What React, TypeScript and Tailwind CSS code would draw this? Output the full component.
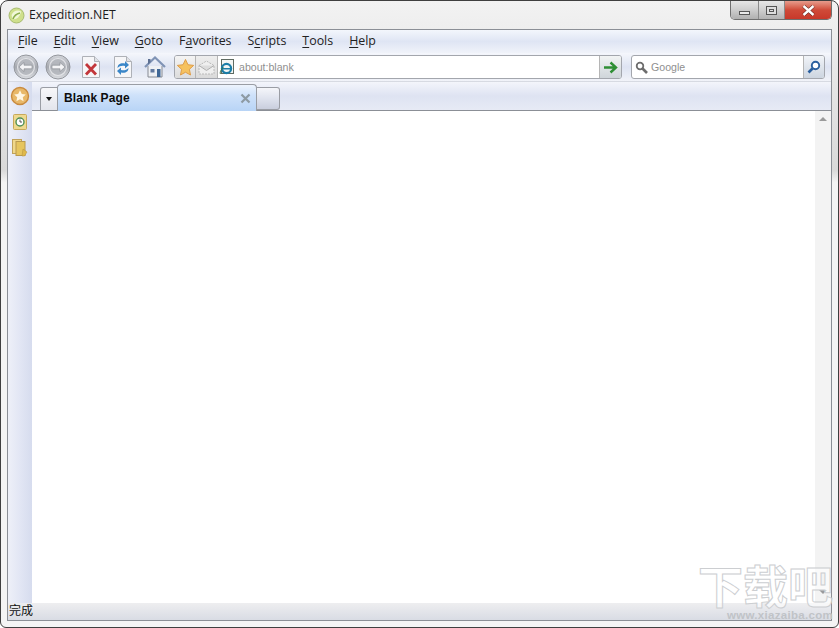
import React from "react";

const font = { fontFamily: '"Liberation Sans", "Noto Sans CJK SC", sans-serif' };

function Menu({ pre, u, post }: { pre?: string; u: string; post: string }) {
  return (
    <span className="text-[12.400px] text-[#222] [font-family:'Open_Sans','Liberation_Sans',sans-serif]">
      {pre}
      <span className="underline underline-offset-2">{u}</span>
      {post}
    </span>
  );
}

function Round({ dir }: { dir: "l" | "r" }) {
  return (
    <svg width="26" height="26" viewBox="0 0 26 26">
      <defs>
        <linearGradient id={"rg" + dir} x1="0" y1="0" x2="0" y2="1">
          <stop offset="0" stopColor="#d4d6db" />
          <stop offset="0.5" stopColor="#a6a9b0" />
          <stop offset="1" stopColor="#dcdee2" />
        </linearGradient>
      </defs>
      <circle cx="13" cy="13" r="12" fill={"url(#rg" + dir + ")"} stroke="#94979d" />
      <circle cx="13" cy="13" r="8.500" fill="#b4b7bd" stroke="#e8e9ec" strokeWidth="1.200" opacity="0.85" />
      {dir === "l" ? (
        <path d="M6 13l5-4.500v2.700h8v3.600h-8v2.700z" fill="#f4f4f6" stroke="#85888e" strokeWidth="0.600" />
      ) : (
        <path d="M20 13l-5-4.500v2.700h-8v3.600h8v2.700z" fill="#f4f4f6" stroke="#85888e" strokeWidth="0.600" />
      )}
    </svg>
  );
}

function Page({ children }: { children: React.ReactNode }) {
  return (
    <svg width="20" height="24" viewBox="0 0 20 24">
      <path d="M1.500 1.500h12l5 5v16h-17z" fill="#f6f6f8" stroke="#aeb1b7" />
      <path d="M13.500 1.500v5h5" fill="#dfe1e6" stroke="#aeb1b7" />
      {children}
    </svg>
  );
}

export default function App() {
  return (
    <div style={font} className="relative w-[839px] h-[628px] overflow-hidden bg-white">
      <div className="flex flex-col w-full h-full rounded-t-[8px] rounded-b-[6px] border border-[#3f3f3f] bg-gradient-to-b from-[#f2f2f2] via-[#d9d9d9] via-[27%] to-[#f4f4f4] to-[29%]">
        {/* Title bar */}
        <div className="flex items-start h-[28px] shrink-0 relative">
          <div className="flex items-center h-[28px] pl-[7px] gap-[4px]">
            <svg width="17" height="17" viewBox="0 0 17 17">
              <circle cx="8.500" cy="8.500" r="7.500" fill="#cfe08c" stroke="#a8bc70" />
              <path d="M3.500 8c2-4.500 6.500-5.500 9.500-3.500-1 5.500-5 8.500-8.500 7.500z" fill="#f1f7d8" />
              <path d="M5 12c1-3 3-5 7-6" fill="none" stroke="#8cae4c" strokeWidth="1.600" />
            </svg>
            <span className="text-[12.300px] text-[#1c1c1c] [font-family:'Open_Sans','Liberation_Sans',sans-serif]">Expedition.NET</span>
          </div>
          <div className="ml-auto mr-[6px] flex h-[19px] rounded-b-[5px] overflow-hidden border border-t-0 border-[#6f6f6f]">
            <div className="w-[28px] flex items-center justify-center bg-gradient-to-b from-[#e6e6e6] via-[#cdcdcd] to-[#b0b0b0] border-r border-[#8a8a8a]">
              <div className="w-[11px] h-[4px] mt-[5px] bg-[#e9e9e9] border border-[#555]" />
            </div>
            <div className="w-[26px] flex items-center justify-center bg-gradient-to-b from-[#e6e6e6] via-[#cfcfcf] to-[#b3b3b3] border-r border-[#8a8a8a]">
              <div className="w-[11px] h-[9px] border border-[#555] bg-[#ddd] flex items-center justify-center">
                <div className="w-[5px] h-[3px] border border-[#555]" />
              </div>
            </div>
            <div className="w-[46px] flex items-center justify-center bg-gradient-to-b from-[#e69b8c] via-[#cf4a38] to-[#c8382a]">
              <svg width="13" height="11" viewBox="0 0 13 11">
                <path d="M1.500 1l10 9M11.500 1l-10 9" stroke="#5c2018" strokeWidth="3.600" />
                <path d="M1.500 1l10 9M11.500 1l-10 9" stroke="#fff" strokeWidth="2.400" />
              </svg>
            </div>
          </div>
        </div>

        {/* Client */}
        <div className="flex flex-col flex-1 min-h-0 mx-[6px] mb-[6px] border border-[#8b8f96] bg-white">
          {/* Menu */}
          <div className="flex items-center h-[23px] shrink-0 pl-[10px] gap-[16px] bg-gradient-to-b from-[#f3f6fc] via-[#dfe5f4] to-[#f0f3fa]">
            <Menu u="F" post="ile" />
            <Menu u="E" post="dit" />
            <Menu u="V" post="iew" />
            <Menu u="G" post="oto" />
            <Menu pre="F" u="a" post="vorites" />
            <Menu pre="S" u="c" post="ripts" />
            <Menu u="T" post="ools" />
            <Menu u="H" post="elp" />
          </div>
          {/* Toolbar */}
          <div className="flex items-center h-[29px] shrink-0 pl-[5px] bg-gradient-to-b from-[#f5f7fc] via-[#dde3f2] to-[#f1f3f9] border-b border-[#d7dae2]">
            <Round dir="l" />
            <div className="w-[6px]" />
            <Round dir="r" />
            <div className="w-[10px]" />
            <Page>
              <path d="M5 9l10 10.500M15 9L5 19.500" stroke="#c2363a" strokeWidth="2.800" />
            </Page>
            <div className="w-[12px]" />
            <Page>
              <path d="M4.500 13c0-4 3.500-5.500 7.500-4.500V6l4 4-4 3.500v-2.500c-3-.8-5.500 0-7.500 2z" fill="#3a86c8" />
              <path d="M15.500 13c0 4-3.500 5.500-7.500 4.500V20l-4-4 4-3.500v2.500c3 .8 5.500 0 7.500-2z" fill="#3a86c8" />
            </Page>
            <div className="w-[11px]" />
            <svg width="22" height="22" viewBox="0 0 22 22">
              <path d="M4 10v11h14V10" fill="#eef0f4" stroke="#868a92" />
              <path d="M1 11L11 1.500 21 11" fill="none" stroke="#7f93b5" strokeWidth="2.200" />
              <path d="M4 3h2.500v3L4 8.500z" fill="#5c6f92" />
              <rect x="6.500" y="13" width="4" height="3.500" fill="#61799f" />
              <rect x="13" y="13" width="3.500" height="8" fill="#3f6796" />
            </svg>
            <div className="w-[8px]" />
            {/* Address */}
            <div className="flex h-[24px] w-[448px] border border-[#a3a6ad] rounded-[3px] overflow-hidden bg-white">
              <div className="w-[21px] flex items-center justify-center bg-gradient-to-b from-[#f4f4f4] to-[#dcdcdc] border-r border-[#b5b5b5]">
                <svg width="19" height="19" viewBox="0 0 20 20">
                  <path d="M10 1.500l2.600 5.600 6 .7-4.500 4.100 1.200 6L10 15l-5.300 2.900 1.200-6L1.400 7.800l6-.7z" fill="#f6c25f" stroke="#dd9a45" strokeWidth="1" />
                </svg>
              </div>
              <div className="w-[22px] flex items-center justify-center bg-gradient-to-b from-[#eeeeee] to-[#dadada] border-r border-[#b5b5b5]">
                <svg width="17" height="15" viewBox="0 0 17 15">
                  <path d="M1 5.500l7.500-4.500 7.500 4.500v8.500H1z" fill="#efefef" stroke="#b9b9b9" strokeDasharray="2 1" />
                  <path d="M1 5.500l7.500 5 7.500-5" fill="#dcdcdc" stroke="#b0b0b0" />
                </svg>
              </div>
              <div className="w-[18px] flex items-center justify-center">
                <svg width="16" height="17" viewBox="0 0 16 17">
                  <rect x="2.500" y="0.500" width="12" height="14" fill="#f4f6f4" stroke="#5f6b62" />
                  <circle cx="7.500" cy="9.500" r="4.600" fill="none" stroke="#1c7ea8" strokeWidth="2.200" />
                  <path d="M3 9.700h9" stroke="#1c7ea8" strokeWidth="1.600" />
                  <path d="M1.500 15c-1-2 1-5 3-7" fill="none" stroke="#3a6b3a" />
                </svg>
              </div>
              <span className="flex-1 flex items-center pt-[2px] text-[10.600px] text-[#8f8f8f] pl-[3px]">about:blank</span>
              <div className="w-[22px] flex items-center justify-center bg-gradient-to-b from-[#f2f4f4] to-[#cfd5da] border-l border-[#b5b5b5]">
                <svg width="15" height="13" viewBox="0 0 15 13">
                  <path d="M1 6.500h11M7.500 1.500l5.500 5-5.500 5" fill="none" stroke="#2f8f34" strokeWidth="2.400" />
                </svg>
              </div>
            </div>
            <div className="w-[9px]" />
            {/* Search */}
            <div className="flex h-[24px] w-[194px] border border-[#a3a6ad] rounded-[3px] overflow-hidden bg-white">
              <div className="w-[19px] flex items-center justify-center">
                <svg width="13" height="13" viewBox="0 0 13 13">
                  <circle cx="5" cy="5" r="3.300" fill="#fff" stroke="#6d6d6d" strokeWidth="1.800" />
                  <path d="M7.500 7.500l4.500 4.500" stroke="#6d6d6d" strokeWidth="2.600" />
                </svg>
              </div>
              <span className="flex-1 flex items-center pt-[2px] text-[10.600px] text-[#8f8f8f]">Google</span>
              <div className="w-[21px] flex items-center justify-center bg-gradient-to-b from-[#f1f4f8] to-[#cdd5e0] border-l border-[#b5b5b5]">
                <svg width="14" height="14" viewBox="0 0 14 14">
                  <circle cx="8.500" cy="5.500" r="3.700" fill="#fff" stroke="#2a5f9e" strokeWidth="1.900" />
                  <path d="M5.500 8.500L1.500 12.500" stroke="#2a5f9e" strokeWidth="2.600" />
                </svg>
              </div>
            </div>
          </div>

          {/* Body */}
          <div className="flex flex-1 min-h-0">
            <div className="w-[24px] shrink-0 flex flex-col items-center pt-[4px] gap-[6px] bg-gradient-to-r from-[#eef0f8] via-[#e2e6f4] to-[#d6dcee]">
              <svg width="20" height="20" viewBox="0 0 20 20">
                <circle cx="10" cy="10" r="8.500" fill="#e8b869" stroke="#c98a3e" strokeWidth="1.400" />
                <path d="M10 4.200l1.800 3.700 4 .5-3 2.800.8 4L10 13.300l-3.600 1.900.8-4-3-2.800 4-.5z" fill="#fff6e4" />
              </svg>
              <svg width="18" height="20" viewBox="0 0 18 20">
                <rect x="2.500" y="2.500" width="13" height="15" rx="1" fill="#eed98f" stroke="#c8a95a" />
                <circle cx="9" cy="10" r="4" fill="#fff" stroke="#4f8f55" strokeWidth="1.400" />
                <path d="M9 7.500V10h2" fill="none" stroke="#555" />
              </svg>
              <svg width="18" height="20" viewBox="0 0 18 20">
                <rect x="1.500" y="1.500" width="9" height="14" fill="#f0d88a" stroke="#c0a25a" />
                <rect x="5" y="3.500" width="9" height="14" fill="#e6c55e" stroke="#b99a4f" />
                <path d="M12 11l4 3-2.500 4H11z" fill="#e0b94a" stroke="#b18e3e" strokeWidth="0.500" />
              </svg>
            </div>
            <div className="flex-1 min-w-0 flex flex-col">
              {/* Tabs */}
              <div className="flex items-end h-[29px] shrink-0 pl-[8px] bg-gradient-to-b from-[#f3f5fb] via-[#dee3f2] to-[#e7eaf5] border-b border-[#8b8f96]">
                <div className="w-[18px] h-[23px] flex items-center justify-center bg-gradient-to-b from-[#f7f7f9] to-[#e3e5ec] border border-b-0 border-[#9a9da4] rounded-tl-[3px]">
                  <div className="w-0 h-0 border-x-[3px] border-x-transparent border-t-[4px] border-t-[#111]" />
                </div>
                <div className="flex items-center justify-between w-[200px] h-[27px] -mb-px -ml-px pl-[6px] pr-[5px] rounded-t-[4px] border border-b-0 border-[#9a9da4] bg-gradient-to-b from-[#eef4fd] via-[#cfe2fa] via-[38%] to-[#b8d4f6]">
                  <span className="text-[12px] font-bold tracking-[0.1px] text-[#0d0d0d]">Blank Page</span>
                  <svg width="11" height="11" viewBox="0 0 11 11">
                    <path d="M1.500 1.500l8 8M9.500 1.500l-8 8" stroke="#8d9aa3" strokeWidth="2.200" />
                  </svg>
                </div>
                <div className="w-[23px] h-[23px] bg-gradient-to-b from-[#f5f6fa] via-[#dfe3ee] to-[#c9cedd] border border-l-0 border-[#9a9da4] rounded-r-[3px]" />
              </div>
              {/* Page */}
              <div className="flex flex-1 min-h-0 bg-white">
                <div className="flex-1" />
                <div className="w-[16px] shrink-0 flex flex-col items-center justify-between pt-[6px] pb-[9px] bg-[#f3f3f3]">
                  <div className="w-0 h-0 border-x-[4px] border-x-transparent border-b-[4px] border-b-[#9a9a9a]" />
                  <div className="w-0 h-0 border-x-[4px] border-x-transparent border-t-[4px] border-t-[#9a9a9a]" />
                </div>
              </div>
            </div>
          </div>

          {/* Status */}
          <div className="flex items-center h-[17px] shrink-0 pl-[1px] pb-[3px] bg-gradient-to-b from-[#eeeef0] to-[#d9dce4]">
            <span className="text-[12px] leading-none text-[#111] [font-family:'Noto_Sans_CJK_SC',sans-serif]">完成</span>
          </div>
        </div>
      </div>

      {/* Watermark */}
      <div className="absolute left-[697px] top-[560px] w-[136px] flex flex-col items-end pointer-events-none select-none">
        <span className="text-[45px] leading-[50px] font-bold text-white/60 [-webkit-text-stroke:1px_#ccced1] [font-family:'Noto_Sans_CJK_SC',sans-serif]">下载吧</span>
        <span className="text-[11.500px] leading-[12px] -mt-[1px] font-bold text-[#c0c3c7] tracking-[0.3px]">www.xiazaiba.com</span>
      </div>
    </div>
  );
}
